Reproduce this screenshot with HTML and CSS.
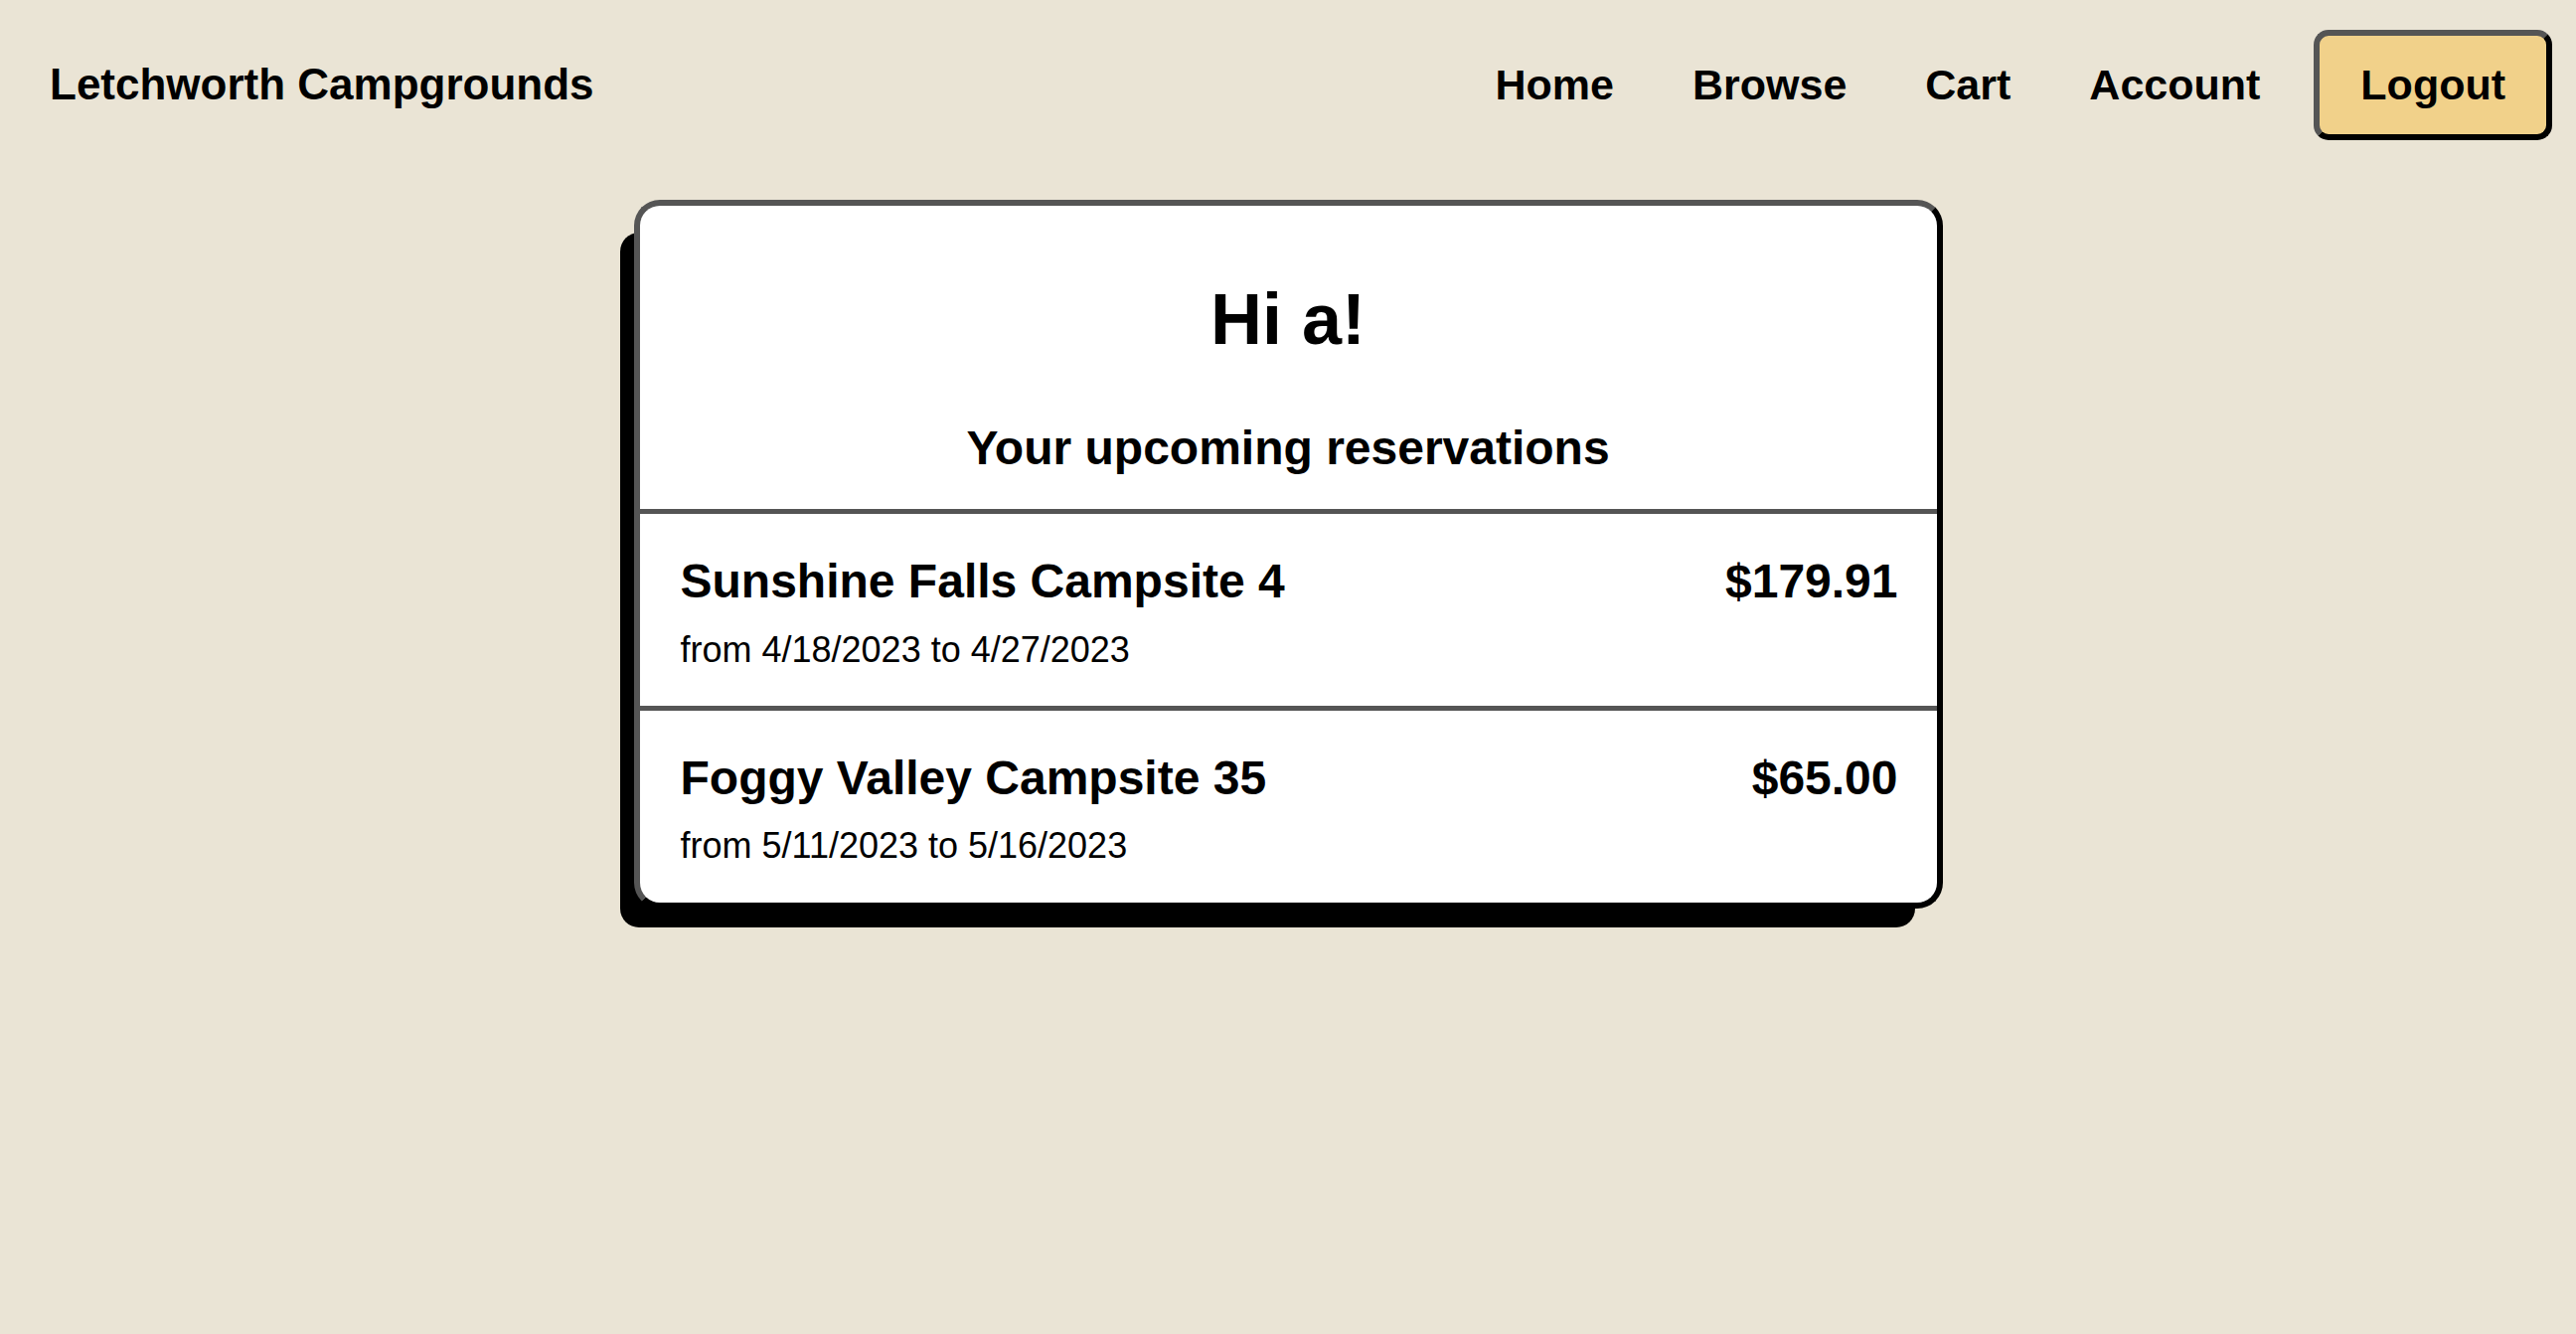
FILE: index.html
```html
<!DOCTYPE html>
<html lang="en">
<head>
<meta charset="utf-8">
<title>Letchworth Campgrounds</title>
<link rel="stylesheet" href="styles.css">
</head>
<body>
<header class="site-header">
  <a class="brand" href="#">Letchworth Campgrounds</a>
  <nav class="nav">
    <ul class="nav-links">
      <li><a href="#">Home</a></li>
      <li><a href="#">Browse</a></li>
      <li><a href="#">Cart</a></li>
      <li><a href="#">Account</a></li>
    </ul>
    <button class="logout" type="button">Logout</button>
  </nav>
</header>
<main class="main">
  <section class="card">
    <div class="card-head">
      <h1 class="greeting">Hi a!</h1>
      <h2 class="subtitle">Your upcoming reservations</h2>
    </div>
    <div class="res">
      <div class="res-line">
        <span class="res-name">Sunshine Falls Campsite 4</span>
        <span class="res-price">$179.91</span>
      </div>
      <div class="res-dates">from 4/18/2023 to 4/27/2023</div>
    </div>
    <div class="res">
      <div class="res-line">
        <span class="res-name">Foggy Valley Campsite 35</span>
        <span class="res-price">$65.00</span>
      </div>
      <div class="res-dates">from 5/11/2023 to 5/16/2023</div>
    </div>
  </section>
</main>
</body>
</html>
```
FILE: styles.css
```css
* { box-sizing: border-box; }

html, body {
  margin: 0;
  padding: 0;
}

body {
  background: #eae4d5;
  color: #000;
  font-family: "Liberation Sans", Arial, Helvetica, sans-serif;
  min-height: 1342px;
}

a { color: inherit; text-decoration: none; }

.site-header {
  display: flex;
  align-items: center;
  justify-content: space-between;
  padding: 30px 24px 0 50px;
}

.brand {
  font-size: 44px;
  font-weight: 700;
  line-height: 1.15;
}

.nav {
  display: flex;
  align-items: center;
  gap: 54px;
}

.nav-links {
  display: flex;
  align-items: center;
  gap: 79px;
  list-style: none;
  margin: 0;
  padding: 0;
}

.nav-links a {
  font-size: 43px;
  font-weight: 700;
  line-height: 1.15;
}

.logout {
  font-family: inherit;
  font-size: 43px;
  font-weight: 700;
  line-height: 1.15;
  color: #000;
  background: #f1d18a;
  padding: 25px 41px;
  border-style: solid;
  border-width: 6px;
  border-color: #555 #000 #000 #555;
  border-radius: 15px;
  cursor: pointer;
}

.main {
  display: flex;
  justify-content: center;
  padding-top: 60px;
}

.card {
  width: 1317px;
  background: #fff;
  border-style: solid;
  border-width: 6px;
  border-color: #555 #000 #000 #555;
  border-radius: 26px;
  box-shadow: -21px 26px 0 -7px #000;
  overflow: hidden;
}

.card-head {
  padding: 73px 20px 34px;
  text-align: center;
}

.greeting {
  margin: 0;
  font-size: 72px;
  font-weight: 700;
  line-height: 1.15;
}

.subtitle {
  margin: 60px 0 0;
  font-size: 48px;
  font-weight: 700;
  line-height: 1.15;
}

.res {
  border-top: 5px solid #555;
  padding: 40px 39px 36px 41px;
}

.res-line {
  display: flex;
  justify-content: space-between;
  align-items: baseline;
  font-size: 48px;
  font-weight: 700;
  line-height: 1.15;
}

.res-dates {
  margin-top: 20px;
  font-size: 36px;
  line-height: 1.15;
}
```
